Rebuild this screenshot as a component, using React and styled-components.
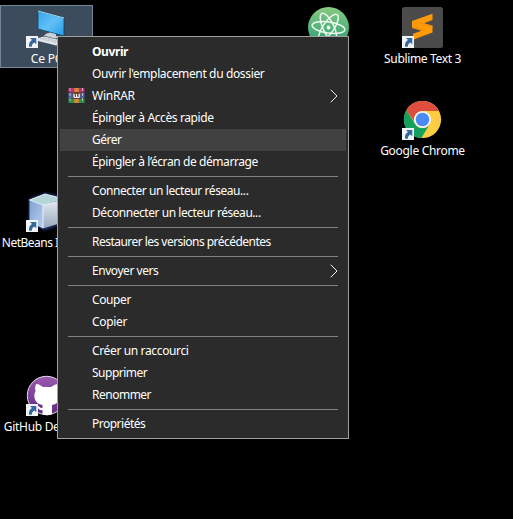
import React from "react";
import styled, { createGlobalStyle, css } from "styled-components";

const GlobalStyle = createGlobalStyle`
  * { box-sizing: border-box; }
  body {
    margin: 0;
    background: #000;
    color: #fff;
    font-family: "Noto Sans", "Open Sans", sans-serif;
    font-size: 12px;
    overflow: hidden;
  }
`;

const Desktop = styled.main`
  position: relative;
  width: 513px;
  height: 519px;
  overflow: hidden;
  background: #000;
`;

const Shortcut = styled.div`
  position: absolute;
  left: ${(p) => p.$x}px;
  top: ${(p) => p.$y}px;
  width: 93px;
  height: 63px;
  padding-top: 1px;
  display: flex;
  flex-direction: column;
  align-items: center;
  border: 1px solid transparent;
  ${(p) =>
    p.$selected &&
    css`
      background: #3c4c5c;
      border-color: #73879a;
    `}
`;

const IconArt = styled.svg`
  display: block;
  flex: none;
  width: 43px;
  height: 42px;
  overflow: visible;
`;

const Label = styled.span`
  line-height: 16px;
  margin-top: 2px;
  white-space: nowrap;
  letter-spacing: ${(p) => p.$spacing}px;
`;

const Menu = styled.div`
  position: absolute;
  left: 57px;
  top: 36px;
  width: 292px;
  height: 403px;
  padding: 4px 2px;
  background: #2b2b2b;
  border: 1px solid #a0a0a0;
`;

const MenuItem = styled.div`
  display: grid;
  grid-template-columns: 32px 1fr 16px;
  align-items: center;
  height: 22px;
  background: ${(p) => (p.$active ? "#414141" : "transparent")};
  font-weight: ${(p) => (p.$bold ? 700 : 400)};
`;

const MenuIcon = styled.span`
  display: flex;
  padding-left: 8px;
`;

const MenuLabel = styled.span`
  line-height: 20px;
  padding-bottom: 1px;
  white-space: nowrap;
  letter-spacing: ${(p) => p.$spacing}px;
`;

const Separator = styled.hr`
  height: 1px;
  margin: 3px 8px;
  border: 0;
  background: #808080;
`;

const Badge = () => (
  <g>
    <rect x="1" y="29" width="12" height="12" fill="#f1f4f7" />
    <path d="M5 31h6.3v6.3L9.4 35.5C7.6 36.5 6.8 37.800 6.800 39.800H4.200C3.300 37 4.500 34.600 7 33Z" fill="#35689f" />
  </g>
);

const PcIcon = () => (
  <IconArt viewBox="0 0 43 42">
    <defs>
      <linearGradient id="screen" x1="0" y1="0" x2="1" y2="1">
        <stop offset="0" stopColor="#35a5ec" />
        <stop offset=".5" stopColor="#62c0f6" />
        <stop offset="1" stopColor="#239be8" />
      </linearGradient>
    </defs>
    <path d="M13 4 39 11V29L13 22Z" fill="url(#screen)" stroke="#123e60" strokeWidth=".8" />
    <path d="M13 4 39 11" stroke="#a9ddfa" strokeWidth="1" />
    <path d="M25 25.500 31 27V29L35 30 30 31.500 19 28.700 21 26.800Z" fill="#c9d2d8" />
    <path d="M13 31 19 29.500 39 34V36L31 38.500 13 34Z" fill="#dfe4e8" />
    <path d="M15 31.500 34 36M18 30.700 36 35" stroke="#8d99a3" strokeWidth=".6" strokeDasharray="1.5 1" />
    <Badge />
  </IconArt>
);

const NetBeansIcon = () => (
  <IconArt viewBox="0 0 43 42">
    <defs>
      <linearGradient id="cubeLeft" x1="0" y1="0" x2="1" y2="1">
        <stop offset="0" stopColor="#7f9fd2" />
        <stop offset="1" stopColor="#b9cff0" />
      </linearGradient>
      <linearGradient id="cubeRight" x1="0" y1="0" x2="0" y2="1">
        <stop offset="0" stopColor="#e4eaf0" />
        <stop offset="1" stopColor="#98a8bd" />
      </linearGradient>
      <filter id="glow" x="-20%" y="-20%" width="140%" height="140%">
        <feGaussianBlur stdDeviation="1.2" />
      </filter>
    </defs>
    <path d="M4 8 20 2 40 6V32L20 39 4 32Z" fill="#1c2c58" stroke="#1c2c58" filter="url(#glow)" />
    <path d="M4.500 9 18 14V37.500L4.500 31Z" fill="url(#cubeLeft)" />
    <path d="M18 14 39 9V31L18 37.500Z" fill="url(#cubeRight)" />
    <path d="M4.500 9 20 3 39 8 18 14Z" fill="#b5d6d6" />
    <path d="M4.500 9 18 14 39 9M18 14V37M4.500 9 20 3 39 8" stroke="#e5f0fa" strokeWidth="1" fill="none" />
    <Badge />
  </IconArt>
);

const GitHubIcon = () => (
  <IconArt viewBox="0 0 43 42">
    <defs>
      <linearGradient id="purple" x1="0" y1="0" x2="0" y2="1">
        <stop offset="0" stopColor="#995bb0" />
        <stop offset="1" stopColor="#622884" />
      </linearGradient>
    </defs>
    <circle cx="21.500" cy="20.500" r="19.200" fill="url(#purple)" stroke="#e9dced" strokeWidth="1" />
    <path
      d="M11.200 9C14 9.200 16 10.600 18 12H26C29 10 31 9 33 9 34 12 34 14 33.500 16 37 20 35 29 27 30V39.300Q22 41 17.500 39.300V35C13 36 13 31 10 31 14 29.500 14.500 33.500 17.500 32.800V30C9 29 8 20 10.500 16 9.900 13 10 11 11.200 9Z"
      fill="#fff"
    />
    <Badge />
  </IconArt>
);

const AtomIcon = () => (
  <IconArt viewBox="0 0 43 42">
    <defs>
      <linearGradient id="atomGreen" x1="0" y1="0" x2="0" y2="1">
        <stop offset="0" stopColor="#8acb81" />
        <stop offset=".7" stopColor="#40a977" />
        <stop offset="1" stopColor="#399f78" />
      </linearGradient>
    </defs>
    <circle cx="21.500" cy="20.500" r="20.500" fill="url(#atomGreen)" />
    <g fill="none" stroke="#effaf0" strokeWidth="1.500">
      <ellipse cx="21.500" cy="20.500" rx="16.500" ry="5.500" transform="rotate(8 21.500 20.500)" />
      <ellipse cx="21.500" cy="20.500" rx="15.500" ry="5.500" transform="rotate(65 21.500 20.500)" />
      <ellipse cx="21.500" cy="20.500" rx="15.500" ry="5.500" transform="rotate(124 21.500 20.500)" />
    </g>
    <circle cx="21.500" cy="20.500" r="1.900" fill="#fff" />
  </IconArt>
);

const SublimeIcon = () => (
  <IconArt viewBox="0 0 43 42">
    <rect x="1" y="0" width="41" height="41" rx="2.500" fill="#4b4b4b" />
    <path d="M11 14 31.500 6.700V13L23 16.200 31.500 18.700V25.500L12 32.700V26.800L20.500 23.700 11 20.800Z" fill="#ff9b09" />
    <path d="M23 16.200 31.500 18.700 31.500 20.500 17 15.500ZM11 20.800V19L26 23.500 20.500 23.700Z" fill="#f18f08" />
    <Badge />
  </IconArt>
);

const ChromeIcon = () => (
  <IconArt viewBox="0 0 43 42">
    <circle cx="21.500" cy="20.500" r="18.600" fill="#ffcd40" />
    <path d="M5.400 11.200A18.600 18.600 0 0 1 37.900 12H21.500A8.600 8.600 0 0 0 13.200 22.500Z" fill="#de4d3e" />
    <path d="M5.400 11.200A18.600 18.600 0 0 0 20.400 39.100L29 24.800A8.600 8.600 0 0 1 14 24.800Z" fill="#16a05d" />
    <circle cx="21.500" cy="20.500" r="8.600" fill="#f2f4f6" />
    <circle cx="21.500" cy="20.500" r="6.800" fill="#4a8af4" />
    <Badge />
  </IconArt>
);

const WinRarIcon = () => (
  <svg width="17" height="16" viewBox="0 0 17 16">
    <rect x=".5" y="0" width="16" height="4.500" fill="#b43777" />
    <rect x=".5" y="5" width="16" height="5" fill="#4565b0" />
    <rect x=".5" y="10.500" width="16" height="4.500" fill="#289351" />
    <path d="M2 0V15M14.500 0V15" stroke="#d5c5d0" strokeWidth=".8" strokeDasharray="3 2" />
    <rect x="6.300" y="0" width="4.500" height="15" fill="#df8434" />
    <rect x="4.500" y="4" width="8" height="7" rx="1" fill="#6e3e34" />
    <path d="M6 5.800V9Q7.200 10 8.500 9V6M8.500 9Q10 10 11.200 9V5.800" fill="none" stroke="#fff" strokeWidth="1.200" />
  </svg>
);

const Chevron = () => (
  <svg width="8" height="14" viewBox="0 0 8 14">
    <path d="M.7 .7 7 7 .7 13.300" fill="none" stroke="#f0f0f0" strokeWidth="1" />
  </svg>
);

const shortcuts = [
  { name: "Ce PC", x: 0, y: 5, Icon: PcIcon, selected: true, spacing: -0.2 },
  { name: "NetBeans IDE 8.2", x: 0, y: 189, Icon: NetBeansIcon, spacing: -0.5 },
  { name: "GitHub Desktop", x: 0, y: 373, Icon: GitHubIcon, spacing: -0.3 },
  { name: "Atom", x: 282, y: 5, Icon: AtomIcon, spacing: 0 },
  { name: "Sublime Text 3", x: 376, y: 5, Icon: SublimeIcon, spacing: -0.35 },
  { name: "Google Chrome", x: 376, y: 97, Icon: ChromeIcon, spacing: -0.3 },
];

const groups = [
  [
    { text: "Ouvrir", bold: true, spacing: -0.4 },
    { text: "Ouvrir l'emplacement du dossier", spacing: -0.36 },
    { text: "WinRAR", icon: <WinRarIcon />, submenu: true, spacing: -0.25 },
    { text: "Épingler à Accès rapide", spacing: -0.39 },
    { text: "Gérer", active: true, spacing: -0.5 },
    { text: "Épingler à l’écran de démarrage", spacing: -0.41 },
  ],
  [
    { text: "Connecter un lecteur réseau...", spacing: -0.43 },
    { text: "Déconnecter un lecteur réseau...", spacing: -0.45 },
  ],
  [{ text: "Restaurer les versions précédentes", spacing: -0.53 }],
  [{ text: "Envoyer vers", submenu: true, spacing: -0.45 }],
  [
    { text: "Couper", spacing: -0.4 },
    { text: "Copier", spacing: -0.3 },
  ],
  [
    { text: "Créer un raccourci", spacing: -0.36 },
    { text: "Supprimer", spacing: -0.5 },
    { text: "Renommer", spacing: -0.5 },
  ],
  [{ text: "Propriétés", spacing: -0.5 }],
];

export default function App() {
  return (
    <Desktop>
      <GlobalStyle />
      {shortcuts.map(({ name, x, y, Icon, selected, spacing }) => (
        <Shortcut key={name} $x={x} $y={y} $selected={selected}>
          <Icon />
          <Label $spacing={spacing}>{name}</Label>
        </Shortcut>
      ))}
      <Menu role="menu">
        {groups.map((items, index) => (
          <React.Fragment key={items[0].text}>
            {index > 0 && <Separator />}
            {items.map((item) => (
              <MenuItem key={item.text} role="menuitem" $active={item.active} $bold={item.bold}>
                <MenuIcon>{item.icon}</MenuIcon>
                <MenuLabel $spacing={item.spacing}>{item.text}</MenuLabel>
                {item.submenu && <Chevron />}
              </MenuItem>
            ))}
          </React.Fragment>
        ))}
      </Menu>
    </Desktop>
  );
}
